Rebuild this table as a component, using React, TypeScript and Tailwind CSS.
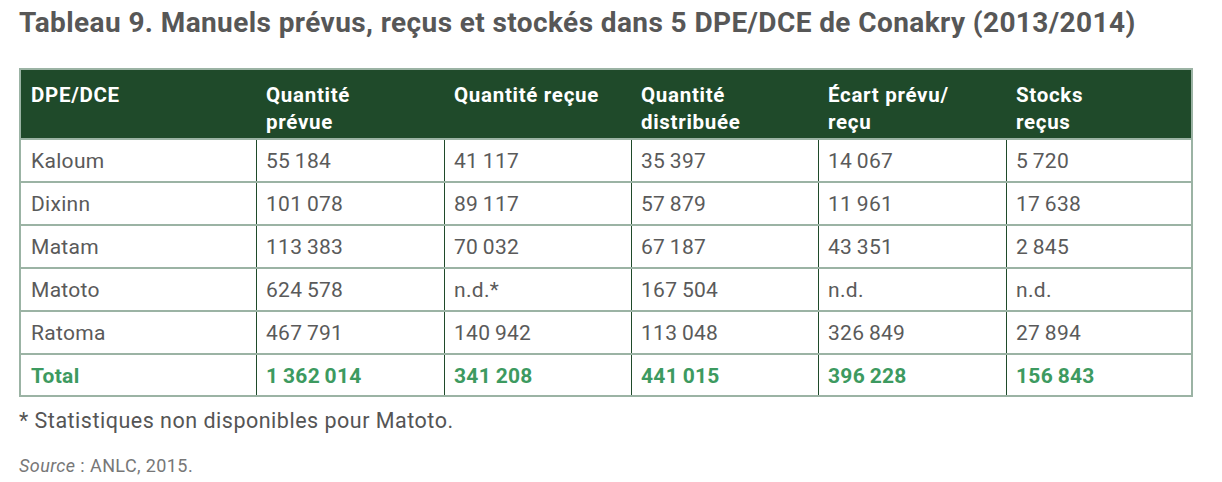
const headers: string[][] = [
  ["DPE/DCE"],
  ["Quantité", "prévue"],
  ["Quantité reçue"],
  ["Quantité", "distribuée"],
  ["Écart prévu/", "reçu"],
  ["Stocks", "reçus"],
];

// thin space as thousands separator
const n = (s: string) => s.replace(/ /g, "\u2009");

const rows: string[][] = [
  ["Kaloum", "55 184", "41 117", "35 397", "14 067", "5 720"],
  ["Dixinn", "101 078", "89 117", "57 879", "11 961", "17 638"],
  ["Matam", "113 383", "70 032", "67 187", "43 351", "2 845"],
  ["Matoto", "624 578", "n.d.*", "167 504", "n.d.", "n.d."],
  ["Ratoma", "467 791", "140 942", "113 048", "326 849", "27 894"],
];

const total = ["Total", "1 362 014", "341 208", "441 015", "396 228", "156 843"];

const cols = "grid grid-cols-[235px_188px_187px_187px_188px_186px]";

export default function App() {
  return (
    <div className="w-[1222px] h-[482px] bg-white font-['Roboto',sans-serif] pl-[19px] pt-[5px]">
      <h1 className="text-[28px] font-bold text-[#575757] tracking-[0.4px] leading-[36px] whitespace-nowrap">
        Tableau 9. Manuels prévus, reçus et stockés dans 5 DPE/DCE de Conakry (2013/2014)
      </h1>

      <div className="mt-[27px] w-[1174px] border-2 border-[#9bb3a4]">
        {/* header */}
        <div className={`${cols} bg-[#1f4a2a] h-[68px]`}>
          {headers.map((h, i) => (
            <div
              key={i}
              className="pl-[10px] pr-2 pt-[12px] text-[20.5px] font-bold leading-[27px] tracking-[0.7px] text-white whitespace-nowrap"
            >
              {h.map((line, li) => (
                <div key={li}>{line}</div>
              ))}
            </div>
          ))}
        </div>

        {rows.map((r, ri) => (
          <div key={ri} className={`${cols} h-[43px] border-t-2 border-[#9bb3a4]`}>
            {r.map((c, ci) => (
              <div
                key={ci}
                className={`flex items-center pt-[3px] text-[21px] text-[#5a5a5a] tracking-[0.3px] ${ci > 0 ? "border-l border-[#1f4a2a] pl-[9px]" : "pl-[10px]"}`}
              >
                {n(c)}
              </div>
            ))}
          </div>
        ))}

        <div className={`${cols} h-[42px] border-t-2 border-[#9bb3a4]`}>
          {total.map((c, ci) => (
            <div
              key={ci}
              className={`flex items-center pt-[3px] text-[21px] font-bold text-[#3d9a60] tracking-[0.3px] ${ci > 0 ? "border-l border-[#1f4a2a] pl-[9px]" : "pl-[10px]"}`}
            >
              {n(c)}
            </div>
          ))}
        </div>
      </div>

      <p className="mt-[10px] text-[21.5px] text-[#555] leading-[28px] tracking-[0.5px]">
        * Statistiques non disponibles pour Matoto.
      </p>
      <p className="mt-[19px] text-[18px] text-[#777] leading-[24px] tracking-[0.4px]">
        <span className="italic">Source</span> : ANLC, 2015.
      </p>
    </div>
  );
}
